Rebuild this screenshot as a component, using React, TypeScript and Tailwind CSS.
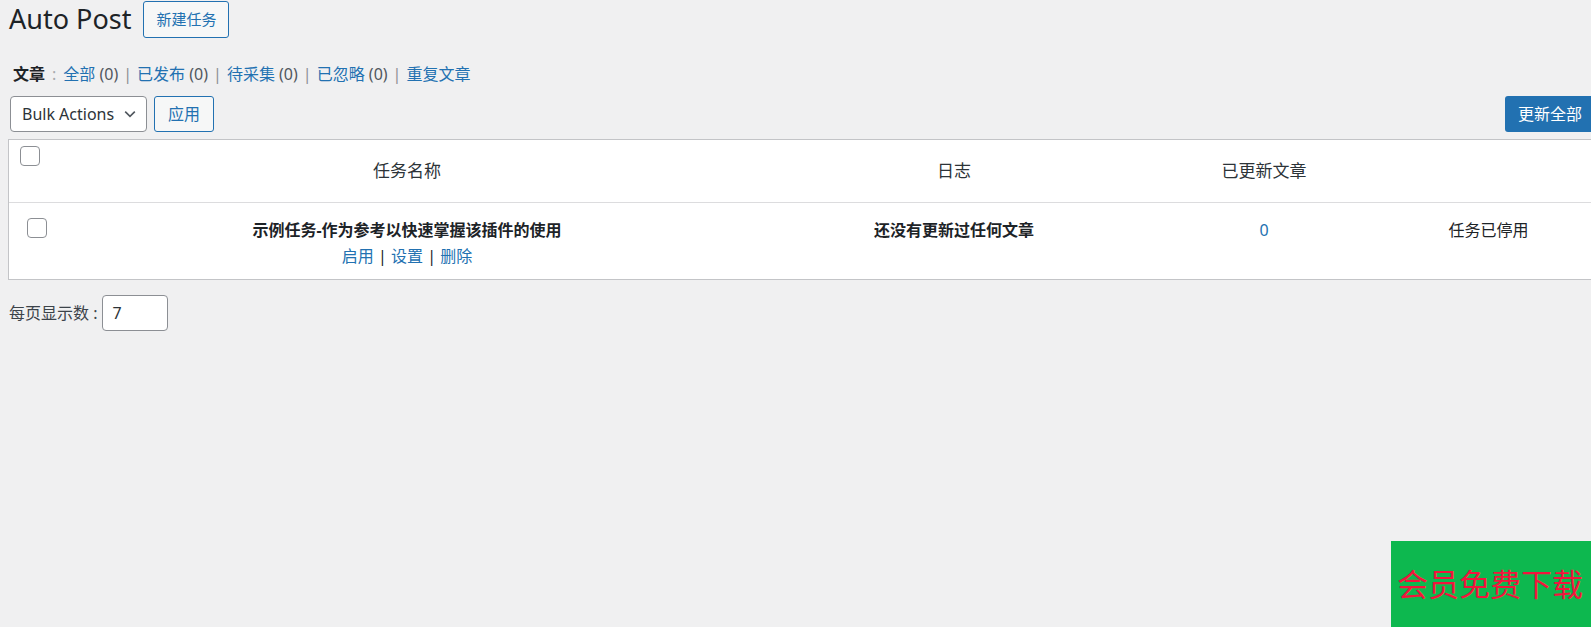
import React, { useState } from "react";

const FONT = "font-['Noto_Sans','Noto_Sans_CJK_SC',sans-serif]";

const Checkbox: React.FC<{ checked: boolean; onChange: () => void }> = ({ checked, onChange }) => (
  <button
    type="button"
    onClick={onChange}
    className="w-[20px] h-[20px] rounded-[4px] border border-[#8c8f94] bg-white flex items-center justify-center"
    aria-checked={checked}
    role="checkbox"
  >
    {checked && (
      <svg viewBox="0 0 20 20" className="w-[16px] h-[16px]">
        <path d="M4 10l4 4 8-8" fill="none" stroke="#2271b1" strokeWidth="2.5" />
      </svg>
    )}
  </button>
);

const App: React.FC = () => {
  const [allChecked, setAllChecked] = useState(false);
  const [rowChecked, setRowChecked] = useState(false);
  const [perPage, setPerPage] = useState("7");

  const filters = [
    { name: "全部", count: "(0)" },
    { name: "已发布", count: "(0)" },
    { name: "待采集", count: "(0)" },
    { name: "已忽略", count: "(0)" },
    { name: "重复文章", count: "" },
  ];

  return (
    <div className={`relative w-full min-h-[627px] overflow-hidden bg-[#f0f0f1] text-[#1d2327] ${FONT}`}>
      <div className="pl-[9px]">
        {/* Page title */}
        <div className="flex items-center h-[38px]">
          <h1 className="text-[27px] leading-[38px] font-normal text-[#1d2327]">Auto Post</h1>
          <button className="ml-[12px] mt-[1px] h-[37px] px-[12px] rounded-[3px] border border-[#2271b1] bg-[#f6f7f7] text-[#2271b1] text-[15px] leading-none">
            新建任务
          </button>
        </div>

        {/* Status filters */}
        <div className="mt-[24px] pl-[4px] h-[24px] text-[16px] leading-[24px] flex items-center whitespace-pre">
          <span className="font-bold text-[#1d2327]">文章</span>
          <span className="px-[7px] text-[#a7aaad]">:</span>
          {filters.map((f, i) => (
            <React.Fragment key={f.name}>
              <a href="#" className="text-[#2271b1]">{f.name}</a>
              {f.count && <span className="text-[#50575e]"> {f.count}</span>}
              {i < filters.length - 1 && <span className="px-[5px] text-[#8c8f94]">|</span>}
            </React.Fragment>
          ))}
        </div>

        {/* Bulk actions */}
        <div className="mt-[10px] flex items-center">
          <div className="ml-[1px] w-[137px] h-[36px] rounded-[4px] border border-[#8c8f94] bg-white flex items-center justify-between pl-[11px] pr-[8px] text-[16px] text-[#2c3338]">
            <span>Bulk Actions</span>
            <svg viewBox="0 0 20 20" className="w-[16px] h-[16px]">
              <path d="M4 7l6 6 6-6" fill="none" stroke="#50575e" strokeWidth="2" />
            </svg>
          </div>
          <button className="ml-[7px] w-[60px] h-[36px] rounded-[3px] border border-[#2271b1] bg-[#f6f7f7] text-[#2271b1] text-[16px]">
            应用
          </button>
          <button className="ml-auto mr-[-6px] h-[36px] w-[92px] rounded-[3px] bg-[#2271b1] text-white text-[16px] text-left pl-[13px]">
            更新全部
          </button>
        </div>

        {/* Task table */}
        <div className="mt-[7px] -ml-[1px] w-[1585px] border border-[#c3c4c7] bg-white">
          <div className="grid grid-cols-[40px_716px_378px_242px_1fr] h-[63px] border-b border-[#dcdcde] text-[17px] text-[#2c3338]">
            <div className="pl-[11px] pt-[6px]">
              <Checkbox checked={allChecked} onChange={() => setAllChecked(!allChecked)} />
            </div>
            <div className="flex items-center justify-center">任务名称</div>
            <div className="flex items-center justify-center">日志</div>
            <div className="flex items-center justify-center">已更新文章</div>
            <div />
          </div>
          <div className="grid grid-cols-[40px_716px_378px_242px_1fr] h-[76px] text-[16px] leading-[24px]">
            <div className="pl-[18px] pt-[15px]">
              <Checkbox checked={rowChecked} onChange={() => setRowChecked(!rowChecked)} />
            </div>
            <div className="pt-[15px] flex flex-col items-center">
              <strong className="font-bold text-[#1d2327]">示例任务-作为参考以快速掌握该插件的使用</strong>
              <div className="mt-[2px] whitespace-pre text-[#1d2327]">
                <a href="#" className="text-[#2271b1]">启用</a> | <a href="#" className="text-[#2271b1]">设置</a> | <a href="#" className="text-[#2271b1]">删除</a>
              </div>
            </div>
            <div className="pt-[15px] text-center font-bold text-[#1d2327]">还没有更新过任何文章</div>
            <div className="pt-[15px] text-center text-[#2271b1]">0</div>
            <div className="pt-[15px] text-center text-[#1d2327]">任务已停用</div>
          </div>
        </div>

        {/* Per page */}
        <div className="mt-[15px] flex items-center text-[16px] text-[#3c434a]">
          <span>每页显示数 :</span>
          <input
            value={perPage}
            onChange={(e) => setPerPage(e.target.value)}
            className="ml-[5px] w-[66px] h-[36px] rounded-[4px] border border-[#8c8f94] bg-white pl-[9px] text-[16px] text-[#2c3338] outline-none"
          />
        </div>
      </div>

      {/* Floating promo */}
      <div className="absolute left-[1391px] top-[541px] w-[200px] h-[86px] bg-[#0db84f] flex items-center pl-[6px]">
        <span className="text-[31px] leading-none text-[#f2153d] whitespace-nowrap">会员免费下载</span>
      </div>
    </div>
  );
};

export default App;
